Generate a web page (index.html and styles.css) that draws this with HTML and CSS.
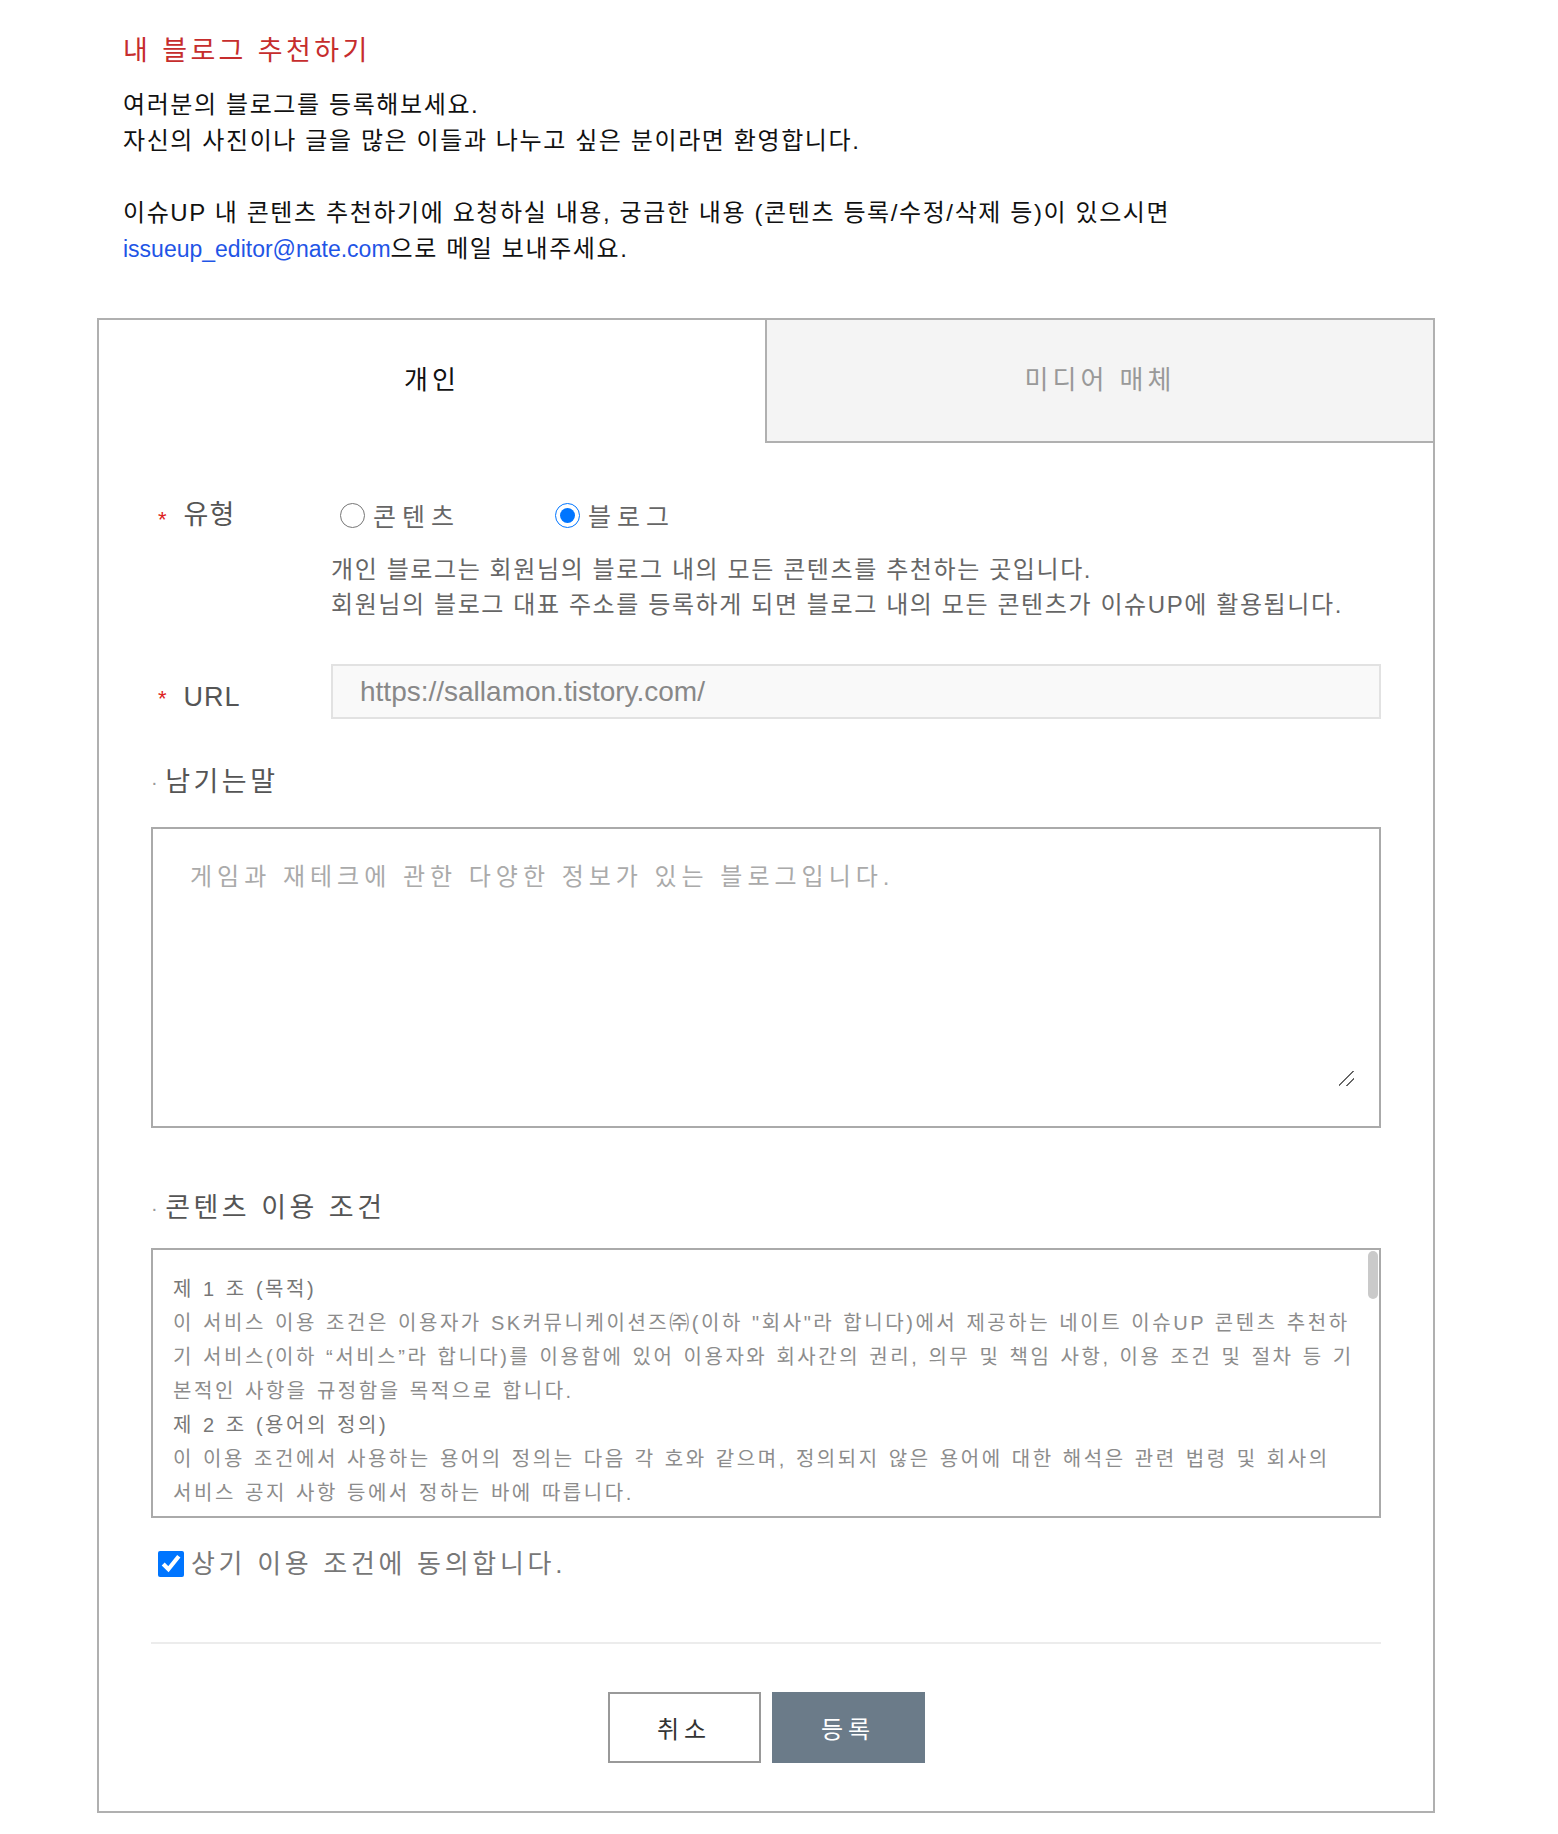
FILE: index.html
```html
<!DOCTYPE html>
<html lang="ko">
<head>
  <meta charset="UTF-8">
  <meta name="viewport" content="width=device-width, initial-scale=1.0">
  <title>내 블로그 추천하기</title>
  <link rel="stylesheet" href="styles.css">
</head>
<body>
  <div class="wrap">
    <h2 class="page-title">내 블로그 추천하기</h2>
    <p class="intro">
      여러분의 블로그를 등록해보세요.<br>
      자신의 사진이나 글을 많은 이들과 나누고 싶은 분이라면 환영합니다.<br>
      <br>
      이슈UP 내 콘텐츠 추천하기에 요청하실 내용, 궁금한 내용 (콘텐츠 등록/수정/삭제 등)이 있으시면<br>
      <a href="mailto:issueup_editor@nate.com">issueup_editor@nate.com</a>으로 메일 보내주세요.
    </p>

    <div class="recommend-box">
      <div class="tabs">
        <a class="tab on" href="#">개인</a>
        <a class="tab" href="#">미디어 매체</a>
      </div>

      <form class="recommend-form">
        <div class="form-row type-row">
          <div class="form-label req">유형</div>
          <div class="form-field">
            <div class="radios">
              <label class="radio-item"><input type="radio" name="type">콘텐츠</label>
              <label class="radio-item"><input type="radio" name="type" checked>블로그</label>
            </div>
            <p class="desc">
              개인 블로그는 회원님의 블로그 내의 모든 콘텐츠를 추천하는 곳입니다.<br>
              회원님의 블로그 대표 주소를 등록하게 되면 블로그 내의 모든 콘텐츠가 이슈UP에 활용됩니다.
            </p>
          </div>
        </div>

        <div class="form-row url-row">
          <div class="form-label req">URL</div>
          <div class="form-field">
            <input class="url-input" type="text" value="https://sallamon.tistory.com/">
          </div>
        </div>

        <h3 class="sub-title">남기는말</h3>
        <div class="memo-box">
          <textarea class="memo" placeholder="게임과 재테크에 관한 다양한 정보가 있는 블로그입니다."></textarea>
        </div>

        <h3 class="sub-title terms-title">콘텐츠 이용 조건</h3>
        <div class="terms-wrap">
          <div class="terms">
            <p class="terms-head">제 1 조 (목적)</p>
            <p>이 서비스 이용 조건은 이용자가 SK커뮤니케이션즈㈜(이하 "회사"라 합니다)에서 제공하는 네이트 이슈UP 콘텐츠 추천하기 서비스(이하 “서비스”라 합니다)를 이용함에 있어 이용자와 회사간의 권리, 의무 및 책임 사항, 이용 조건 및 절차 등 기본적인 사항을 규정함을 목적으로 합니다.</p>
            <p class="terms-head">제 2 조 (용어의 정의)</p>
            <p>이 이용 조건에서 사용하는 용어의 정의는 다음 각 호와 같으며, 정의되지 않은 용어에 대한 해석은 관련 법령 및 회사의 서비스 공지 사항 등에서 정하는 바에 따릅니다.</p>
            <p>1. "이용자"란 이 이용 조건에 따라 회사가 제공하는 서비스를 이용하는 회원을 말합니다.</p>
            <p>2. "콘텐츠"란 이용자가 서비스에 추천한 블로그, 게시물, 사진, 동영상 등 일체의 정보를 말합니다.</p>
            <p class="terms-head">제 3 조 (이용 조건의 효력 및 변경)</p>
            <p>① 이 이용 조건은 서비스 화면에 게시하거나 기타의 방법으로 이용자에게 공지함으로써 효력이 발생합니다.</p>
            <p>② 회사는 합리적인 사유가 발생할 경우 관련 법령에 위배되지 않는 범위 안에서 이 이용 조건을 변경할 수 있으며, 변경된 이용 조건은 제1항과 같은 방법으로 공지합니다.</p>
            <p class="terms-head">제 4 조 (콘텐츠의 추천 및 등록)</p>
            <p>① 이용자는 본인이 직접 운영하는 블로그 또는 본인이 권리를 보유한 콘텐츠에 한하여 추천을 신청할 수 있습니다.</p>
            <p>② 회사는 추천된 콘텐츠를 검토하여 서비스의 운영 방침에 적합하지 않은 경우 등록을 거절하거나 보류할 수 있습니다.</p>
            <p>③ 등록된 콘텐츠는 이슈UP 서비스 내에서 제목, 요약, 대표 이미지 등의 형태로 노출될 수 있습니다.</p>
            <p class="terms-head">제 5 조 (콘텐츠의 수정 및 삭제)</p>
            <p>① 이용자는 등록된 콘텐츠의 수정 또는 삭제를 원하는 경우 이메일을 통해 회사에 요청할 수 있습니다.</p>
            <p>② 회사는 등록된 콘텐츠가 타인의 권리를 침해하거나 관련 법령에 위배되는 경우 사전 통지 없이 삭제할 수 있습니다.</p>
            <p class="terms-head">제 6 조 (이용자의 의무)</p>
            <p>① 이용자는 타인의 저작권, 초상권 등 권리를 침해하는 콘텐츠를 추천하여서는 안 됩니다.</p>
            <p>② 이용자는 음란물, 불법 광고 등 공공질서 및 미풍양속에 반하는 콘텐츠를 추천하여서는 안 됩니다.</p>
            <p class="terms-head">제 7 조 (책임의 제한)</p>
            <p>회사는 이용자가 추천한 콘텐츠의 내용에 대하여 책임을 지지 않으며, 이로 인하여 발생한 분쟁에 대하여는 이용자가 모든 책임을 부담합니다.</p>
            <p class="terms-head">부칙</p>
            <p>이 이용 조건은 게시한 날부터 시행합니다.</p>
          </div>
          <span class="terms-thumb"></span>
        </div>

        <label class="agree"><input type="checkbox" checked>상기 이용 조건에 동의합니다.</label>

        <div class="btn-area">
          <button type="button" class="btn btn-cancel">취소</button>
          <button type="submit" class="btn btn-submit">등록</button>
        </div>
      </form>
    </div>
  </div>
</body>
</html>
```

FILE: styles.css
```css
* {
  box-sizing: border-box;
}
body {
  margin: 0;
  font-family: "Liberation Sans", "Noto Sans CJK KR", sans-serif;
  color: #111;
  background: #fff;
}
.wrap {
  width: 1338px;
  margin-left: 97px;
  padding-top: 31px;
}
.page-title {
  margin: 0 0 0 26px;
  font-size: 27px;
  line-height: 40px;
  font-weight: normal;
  letter-spacing: 3.4px;
  color: #c62d2d;
}
.intro {
  margin: 16px 0 0 26px;
  font-size: 24px;
  line-height: 36px;
  letter-spacing: 1.6px;
}
.intro a {
  font-size: 23px;
  color: #1f55e6;
  text-decoration: none;
  letter-spacing: 0;
}

/* box + tabs */
.recommend-box {
  margin-top: 51px;
  border: 2px solid #b0b0b0;
}
.tabs {
  display: flex;
}
.tab {
  flex: 1;
  height: 123px;
  line-height: 121px;
  text-align: center;
  font-size: 26px;
  letter-spacing: 4px;
  color: #999;
  text-decoration: none;
  background: #f4f4f4;
  border-left: 2px solid #b0b0b0;
  border-bottom: 2px solid #b0b0b0;
}
.tab.on {
  color: #111;
  background: #fff;
  border: 0;
}

/* form */
.recommend-form {
  padding: 57px 52px 48px;
}
.form-row {
  display: flex;
}
.form-label {
  width: 180px;
  flex-shrink: 0;
  padding-left: 7px;
  font-size: 27px;
  line-height: 30px;
  letter-spacing: 1px;
  color: #555;
}
.req::before {
  content: "*";
  display: inline-block;
  margin-right: 16px;
  font-size: 22px;
  line-height: 30px;
  color: #d22;
  vertical-align: top;
  transform: translateY(5px);
}
.form-field {
  flex: 1;
}
.radios {
  display: flex;
  align-items: center;
  height: 30px;
}
.radio-item {
  display: inline-flex;
  align-items: center;
  margin-right: 86px;
  font-size: 25px;
  letter-spacing: 6px;
  color: #666;
}
.radio-item input {
  width: 25px;
  height: 25px;
  margin: 0 8px 0 9px;
}
.desc {
  margin: 22px 0 0;
  font-size: 24px;
  line-height: 35px;
  letter-spacing: 1.6px;
  color: #666;
}
.url-row {
  margin-top: 42px;
  align-items: center;
}
.url-row .form-label {
  padding-top: 10px;
  line-height: 36px;
}
.url-input {
  display: block;
  width: 100%;
  height: 55px;
  padding: 0 27px;
  border: 2px solid #e2e2e2;
  background: #f9f9f9;
  font-family: "Liberation Sans", sans-serif;
  font-size: 28px;
  color: #888;
  outline: none;
}

.sub-title {
  margin: 45px 0 0;
  font-size: 27px;
  line-height: 36px;
  font-weight: normal;
  letter-spacing: 3.5px;
  color: #555;
}
.sub-title::before {
  content: "·";
  font-size: 20px;
  color: #999;
  margin-right: 4px;
  vertical-align: top;
}
.memo-box {
  margin-top: 27px;
  padding: 33px 25px 40px 37px;
  border: 2px solid #aaa;
}
.memo {
  display: block;
  width: 100%;
  height: 224px;
  padding: 0;
  border: 0;
  outline: none;
  resize: vertical;
  font-family: "Liberation Sans", "Noto Sans CJK KR", sans-serif;
  font-size: 24px;
  line-height: 30px;
  letter-spacing: 5px;
  color: #666;
}
.memo::placeholder {
  color: #aaa;
}
.memo::-webkit-scrollbar {
  width: 18px;
  height: 18px;
  background: transparent;
}
.memo::-webkit-resizer {
  background: linear-gradient(135deg, transparent 46%, #666 46%, #666 53%, transparent 53%, transparent 72%, #666 72%, #666 79%, transparent 79%);
}

.terms-title {
  margin-top: 62px;
}
.terms-wrap {
  position: relative;
  margin-top: 22px;
  border: 2px solid #aaa;
}
.terms {
  height: 266px;
  padding: 22px 25px 0 20px;
  overflow-y: auto;
  scrollbar-width: none;
  font-size: 20px;
  line-height: 34px;
  letter-spacing: 2.55px;
  word-spacing: 1px;
  color: #8c8c8c;
}
.terms::-webkit-scrollbar {
  display: none;
}
.terms p {
  margin: 0;
}
.terms .terms-head {
  color: #777;
}
.terms-thumb {
  position: absolute;
  top: 1px;
  right: 1px;
  width: 10px;
  height: 48px;
  border-radius: 5px;
  background: #cacaca;
}

.agree {
  display: flex;
  align-items: center;
  margin-top: 32px;
  font-size: 26px;
  line-height: 28px;
  letter-spacing: 3.7px;
  color: #777;
}
.agree input {
  width: 26px;
  height: 26px;
  margin: 0 7px 0 7px;
}

.btn-area {
  display: flex;
  justify-content: center;
  gap: 11px;
  margin-top: 64px;
  padding-top: 48px;
  border-top: 2px solid #ececec;
}
.btn {
  width: 153px;
  height: 71px;
  font-family: "Liberation Sans", "Noto Sans CJK KR", sans-serif;
  font-size: 24px;
  letter-spacing: 5px;
  cursor: pointer;
}
.btn-cancel {
  border: 2px solid #999;
  background: #fff;
  color: #333;
}
.btn-submit {
  border: 2px solid #6b7b89;
  background: #6b7b89;
  color: #fff;
}
```
